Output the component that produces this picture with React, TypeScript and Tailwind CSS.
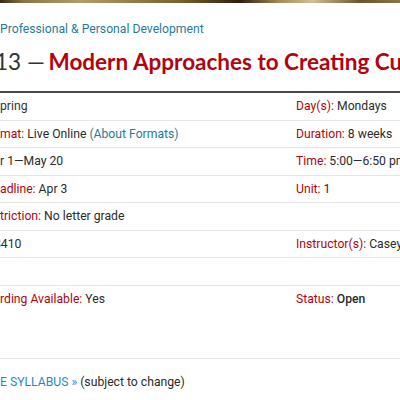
const rows: { left: React.ReactNode; right: React.ReactNode; tall?: boolean }[] = [
  {
    left: <span className="text-[#333]">pring</span>,
    right: (
      <>
        <span className="text-[#b1040e]">Day(s):</span> Mondays
      </>
    ),
  },
  {
    left: (
      <>
        <span className="text-[#b1040e]">mat:</span> Live Online{' '}
        <a className="text-[#1f7c9c]">(About Formats)</a>
      </>
    ),
    right: (
      <>
        <span className="text-[#b1040e]">Duration:</span> 8 weeks
      </>
    ),
  },
  {
    left: <>r 1—May 20</>,
    right: (
      <>
        <span className="text-[#b1040e]">Time:</span> 5:00—6:50 pm (PT)
      </>
    ),
  },
  {
    left: (
      <>
        <span className="text-[#b1040e]">adline:</span> Apr 3
      </>
    ),
    right: (
      <>
        <span className="text-[#b1040e]">Unit:</span> 1
      </>
    ),
  },
  {
    left: (
      <>
        <span className="text-[#b1040e]">triction:</span> No letter grade
      </>
    ),
    right: null,
  },
  {
    left: <span className="-ml-[6px]">$410</span>,
    right: (
      <>
        <span className="text-[#b1040e]">Instructor(s):</span> Casey Lawrence
      </>
    ),
  },
  { left: null, right: null },
  {
    left: (
      <>
        <span className="text-[#b1040e]">rding Available:</span> Yes
      </>
    ),
    right: (
      <>
        <span className="text-[#b1040e]">Status:</span> <span className="font-medium">Open</span>
      </>
    ),
    tall: true,
  },
];

export default function App() {
  return (
    <div className="w-[400px] h-[400px] overflow-hidden bg-white font-['Roboto',sans-serif] text-[#2b2b2b] text-[12.2px]">
      {/* photo strip from the header */}
      <div className="h-[3px] bg-[linear-gradient(90deg,#3a2a14_0%,#8a7448_6%,#b59c6a_20%,#7a5f30_45%,#2d1f0c_60%,#a88c5a_70%,#d2bf94_78%,#6a5530_90%,#8b7446_100%)]" />

      <div className="mt-[18px] text-[#1f7c9c] leading-[17px] whitespace-nowrap">
        Professional &amp; Personal Development
      </div>

      <h1 className="mt-[10px] font-['Lato',sans-serif] text-[22.5px] leading-[28px] whitespace-nowrap">
        <span className="-ml-[5px] text-[#333]">13</span>{' '}
        <span className="-mr-[2px] text-[#333]">—</span>{' '}
        <span className="font-bold text-[#b1040e]">Modern Approaches to Creating Custom Learning</span>
      </h1>

      <div className="mt-[15px] border-t-2 border-[#4a4a4a]">
        {rows.map((row, i) => (
          <div
            key={i}
            className={`grid grid-cols-[296px_1fr] border-b border-[#e6e6e6] py-[4px] leading-[18.5px] whitespace-nowrap ${
              row.tall ? 'h-[73px]' : 'h-[27.5px]'
            }`}
          >
            <div>{row.left}</div>
            <div>{row.right}</div>
          </div>
        ))}
      </div>

      <div className="mt-[14px] whitespace-nowrap leading-[18px]">
        <a className="text-[#1a8ccc]">E SYLLABUS »</a> (subject to change)
      </div>
    </div>
  );
}
